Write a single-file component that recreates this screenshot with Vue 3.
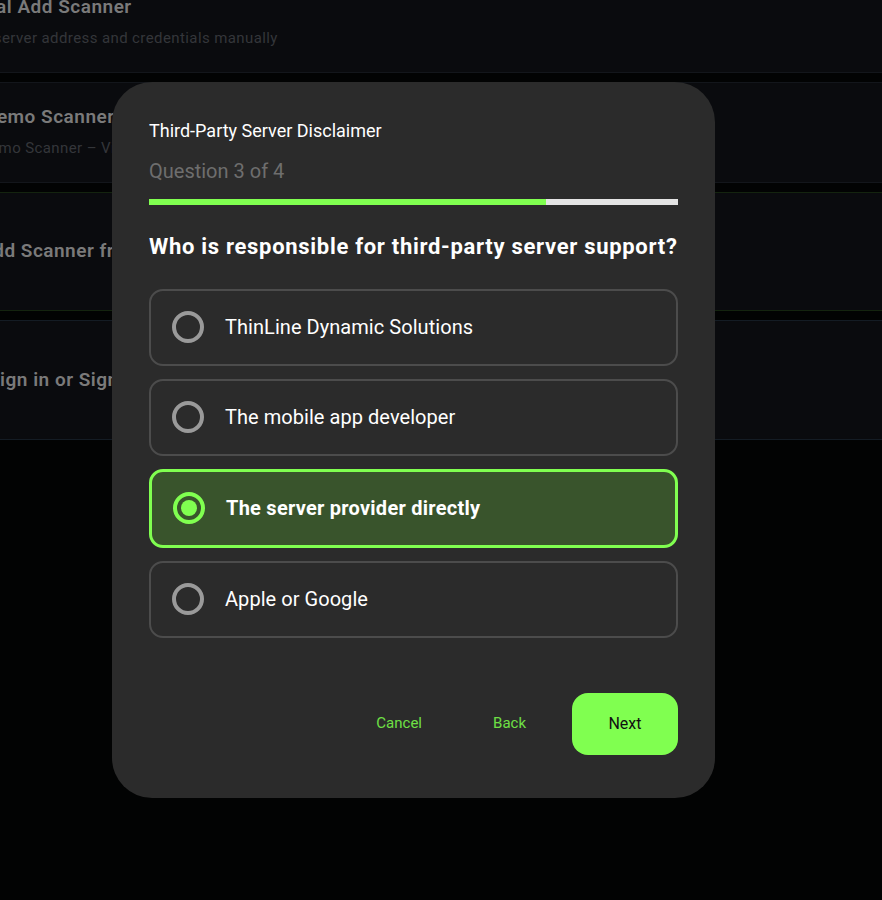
<template>
  <div class="screen">
    <div class="list">
      <div class="row row-first">
        <div class="row-title">Manual Add Scanner</div>
        <div class="row-sub">Enter server address and credentials manually</div>
      </div>
      <div class="row row-demo">
        <div class="row-title">Demo Scanner</div>
        <div class="row-sub">Demo Scanner – View sample data</div>
      </div>
      <div class="row row-green">
        <div class="row-title">Add Scanner from Directory</div>
      </div>
      <div class="row row-sign">
        <div class="row-title">Sign in or Sign up</div>
      </div>
    </div>

    <div class="modal">
      <div class="modal-title">Third-Party Server Disclaimer</div>
      <div class="step">Question 3 of 4</div>
      <div class="progress">
        <div class="progress-fill" :style="{ width: progress + '%' }"></div>
      </div>
      <h2 class="question">Who is responsible for third-party server support?</h2>

      <div class="options">
        <div
          v-for="(opt, i) in options"
          :key="opt"
          class="option"
          :class="{ selected: i === selected }"
        >
          <span class="radio"><span v-if="i === selected" class="radio-dot"></span></span>
          <span class="option-text">{{ opt }}</span>
        </div>
      </div>

      <div class="actions">
        <button class="btn-text btn-cancel">Cancel</button>
        <button class="btn-text btn-back">Back</button>
        <button class="btn-next">Next</button>
      </div>
    </div>
  </div>
</template>

<script setup>
const progress = 75
const selected = 2
const options = [
  'ThinLine Dynamic Solutions',
  'The mobile app developer',
  'The server provider directly',
  'Apple or Google'
]
</script>

<style>
html, body {
  margin: 0;
  background: #000;
}
</style>

<style scoped>
.screen {
  position: relative;
  width: 882px;
  height: 900px;
  overflow: hidden;
  background: #020303;
  font-family: Roboto, "Liberation Sans", sans-serif;
}

.list {
  display: flex;
  flex-direction: column;
  gap: 9px;
  margin-left: -60px;
  margin-top: -30px;
}

.row {
  box-sizing: border-box;
  background: #0a0b0e;
  border-top: 1px solid #13161b;
  border-bottom: 1px solid #13161b;
}

.row-first {
  height: 103px;
  padding: 24px 0 0 6px;
}

.row-first .row-sub {
  margin-left: 7px;
  margin-top: 11px;
}

.row-demo {
  height: 101px;
  padding: 22px 0 0 44px;
}

.row-demo .row-sub {
  margin-left: -4px;
  margin-top: 11px;
}

.row-green {
  height: 119px;
  padding: 46px 0 0 40px;
  border-color: #14240f;
}

.row-sign {
  height: 120px;
  padding: 47px 0 0 48px;
  border-color: #141c24;
}

.row-title {
  color: #7a7a7a;
  font-size: 19px;
  font-weight: 600;
  letter-spacing: 0.5px;
  white-space: nowrap;
}

.row-sub {
  color: #34363a;
  font-size: 15px;
  letter-spacing: 0.4px;
  white-space: nowrap;
}

.modal {
  position: absolute;
  left: 112px;
  top: 82px;
  box-sizing: border-box;
  width: 603px;
  height: 716px;
  padding: 38px 37px 0;
  background: #2b2b2b;
  border-radius: 40px;
}

.modal-title {
  color: #fff;
  font-size: 18px;
  line-height: 22px;
}

.step {
  margin-top: 16px;
  color: #6e6e6e;
  font-size: 20px;
  line-height: 26px;
}

.progress {
  height: 6px;
  margin-top: 15px;
  background: #e4e4e4;
}

.progress-fill {
  height: 100%;
  background: #80ff50;
}

.question {
  margin: 26px 0 0;
  color: #fff;
  font-size: 22px;
  line-height: 32px;
  font-weight: 700;
  letter-spacing: 0.7px;
  white-space: nowrap;
}

.options {
  display: flex;
  flex-direction: column;
  gap: 13px;
  margin-top: 25.5px;
}

.option {
  box-sizing: border-box;
  display: flex;
  align-items: center;
  gap: 21px;
  height: 77px;
  padding-left: 21px;
  border: 2px solid #4c4c4c;
  border-radius: 14px;
}

.option.selected {
  height: 79px;
  background: #39542c;
  border: 3px solid #80ff50;
}

.radio {
  box-sizing: border-box;
  display: flex;
  align-items: center;
  justify-content: center;
  width: 32px;
  height: 32px;
  border: 4px solid #9a9a9a;
  border-radius: 50%;
}

.selected .radio {
  border-color: #80ff50;
}

.radio-dot {
  width: 16px;
  height: 16px;
  background: #80ff50;
  border-radius: 50%;
}

.option-text {
  color: #fff;
  font-size: 20px;
  letter-spacing: 0.05px;
  padding-bottom: 1px;
}

.selected .option-text {
  font-weight: 700;
  letter-spacing: 0.25px;
}

.actions {
  display: flex;
  align-items: center;
  justify-content: flex-end;
  margin-top: 55px;
}

.actions button {
  border: 0;
  font-family: inherit;
  padding: 0 0 1px;
}

.btn-text {
  background: none;
  color: #6fe045;
  font-size: 15px;
}

.btn-cancel {
  margin-right: 71px;
}

.btn-back {
  margin-right: 46px;
}

.btn-next {
  width: 106px;
  height: 62px;
  background: #80ff50;
  color: #111;
  font-size: 16px;
  border-radius: 16px;
}
</style>
